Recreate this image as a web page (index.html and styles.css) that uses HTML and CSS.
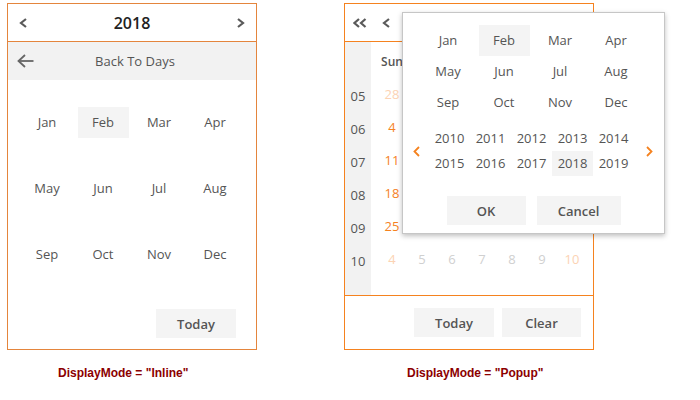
FILE: index.html
```html
<!DOCTYPE html>
<html lang="en">
<head>
  <meta charset="UTF-8" />
  <title>Calendar Display Modes</title>
  <link rel="stylesheet" href="styles.css">
</head>
<body>

<div class="demo">
  <div class="calendar inline">
    <div class="cal-header">
      <svg class="icon" width="8" height="10" viewBox="0 0 8 10"><polyline points="7,1 2,5 7,9"/></svg>
      <span class="cal-title">2018</span>
      <svg class="icon" width="8" height="10" viewBox="0 0 8 10"><polyline points="1,1 6,5 1,9"/></svg>
    </div>
    <div class="back-bar">
      <svg class="back-icon" width="17" height="14" viewBox="0 0 17 14"><line x1="1.5" y1="7" x2="16.5" y2="7"/><polyline points="8,1 1.5,7 8,13"/></svg>
      <span class="back-text">Back To Days</span>
    </div>
    <div class="month-grid">
      <div><span>Jan</span></div><div><span class="active">Feb</span></div><div><span>Mar</span></div><div><span>Apr</span></div>
      <div><span>May</span></div><div><span>Jun</span></div><div><span>Jul</span></div><div><span>Aug</span></div>
      <div><span>Sep</span></div><div><span>Oct</span></div><div><span>Nov</span></div><div><span>Dec</span></div>
    </div>
    <div class="cal-footer">
      <button class="btn btn-today">Today</button>
    </div>
  </div>
  <div class="mode-label label-inline">DisplayMode = "Inline"</div>
</div>

<div class="demo popup-demo">
  <div class="calendar popup">
    <div class="cal-header start">
      <svg class="icon" width="14" height="10" viewBox="0 0 14 10"><polyline points="6,1 1.5,5 6,9"/><polyline points="12.5,1 8,5 12.5,9"/></svg>
      <svg class="icon single" width="8" height="10" viewBox="0 0 8 10"><polyline points="7,1 2,5 7,9"/></svg>
    </div>
    <div class="days-body">
      <div class="week-col">
        <div class="wk head"></div>
        <div class="wk">05</div><div class="wk">06</div><div class="wk">07</div>
        <div class="wk">08</div><div class="wk">09</div><div class="wk">10</div>
      </div>
      <!-- cells marked "under" sit behind the open popup -->
      <div class="day-grid">
        <div class="dow">Sun</div><div class="dow under">Mon</div><div class="dow under">Tue</div><div class="dow under">Wed</div><div class="dow under">Thu</div><div class="dow under">Fri</div><div class="dow under">Sat</div>
        <div class="day other weekend">28</div><div class="day under">29</div><div class="day under">30</div><div class="day under">31</div><div class="day under">1</div><div class="day under">2</div><div class="day under">3</div>
        <div class="day weekend">4</div><div class="day under">5</div><div class="day under">6</div><div class="day under">7</div><div class="day under">8</div><div class="day under">9</div><div class="day under">10</div>
        <div class="day weekend">11</div><div class="day under">12</div><div class="day under">13</div><div class="day under">14</div><div class="day under">15</div><div class="day under">16</div><div class="day under">17</div>
        <div class="day weekend">18</div><div class="day under">19</div><div class="day under">20</div><div class="day under">21</div><div class="day under">22</div><div class="day under">23</div><div class="day under">24</div>
        <div class="day weekend">25</div><div class="day under">26</div><div class="day under">27</div><div class="day under">28</div><div class="day under">1</div><div class="day under">2</div><div class="day under">3</div>
        <div class="day other weekend">4</div><div class="day other">5</div><div class="day other">6</div><div class="day other">7</div><div class="day other">8</div><div class="day other">9</div><div class="day other weekend">10</div>
      </div>
    </div>
    <div class="cal-footer popup-footer">
      <button class="btn btn-today">Today</button>
      <button class="btn btn-clear">Clear</button>
    </div>
  </div>

  <div class="picker">
    <div class="picker-months">
      <div><span>Jan</span></div><div><span class="active">Feb</span></div><div><span>Mar</span></div><div><span>Apr</span></div>
      <div><span>May</span></div><div><span>Jun</span></div><div><span>Jul</span></div><div><span>Aug</span></div>
      <div><span>Sep</span></div><div><span>Oct</span></div><div><span>Nov</span></div><div><span>Dec</span></div>
    </div>
    <div class="picker-years">
      <div class="year-nav">
        <svg class="nav-icon" width="7" height="11" viewBox="0 0 7 11"><polyline points="6,1 1.5,5.5 6,10"/></svg>
      </div>
      <div class="year-grid">
        <span>2010</span><span>2011</span><span>2012</span><span>2013</span><span>2014</span>
        <span>2015</span><span>2016</span><span>2017</span><span class="active">2018</span><span>2019</span>
      </div>
      <div class="year-nav">
        <svg class="nav-icon" width="7" height="11" viewBox="0 0 7 11"><polyline points="1,1 5.5,5.5 1,10"/></svg>
      </div>
    </div>
    <div class="picker-actions">
      <button class="btn btn-ok">OK</button>
      <button class="btn btn-cancel">Cancel</button>
    </div>
  </div>

  <div class="mode-label label-popup">DisplayMode = "Popup"</div>
</div>

</body>
</html>
```

FILE: styles.css
```css
body {
  margin: 0;
  padding: 3px 0 0 7px;
  display: flex;
  gap: 87px;
  font-family: "Open Sans", sans-serif;
  font-size: 13px;
  color: #555;
  background: #fff;
}

.demo {
  width: 250px;
}

.popup-demo {
  position: relative;
}

.calendar {
  box-sizing: border-box;
  width: 250px;
  height: 347px;
  border: 1px solid #e4853d;
  display: flex;
  flex-direction: column;
}

.calendar.popup {
  border-color: #f5821f;
}

.cal-header {
  height: 37px;
  flex: none;
  display: flex;
  align-items: center;
  justify-content: space-between;
  padding: 0 11px;
  border-bottom: 1px solid #e4853d;
}

.popup .cal-header {
  border-bottom-color: #f5821f;
}

.cal-header.start {
  justify-content: flex-start;
  padding: 0 8px;
}

.icon polyline {
  fill: none;
  stroke: #5a5a5a;
  stroke-width: 2.2;
}

.icon.single {
  margin-left: 15px;
}

.cal-title {
  font-size: 16px;
  font-weight: 600;
  color: #222;
}

.back-bar {
  height: 38px;
  flex: none;
  display: flex;
  align-items: center;
  background: #f2f2f2;
}

.back-icon {
  margin-left: 9px;
}

.back-icon line,
.back-icon polyline {
  fill: none;
  stroke: #666;
  stroke-width: 1.8;
}

.back-text {
  flex: 1;
  text-align: center;
  margin-right: 20px;
  font-size: 13px;
}

.month-grid {
  display: grid;
  grid-template-columns: repeat(4, 56px);
  grid-auto-rows: 66px;
  padding: 9px 0 0 11px;
}

.month-grid div,
.picker-months div {
  display: flex;
  align-items: center;
  justify-content: center;
}

.month-grid span,
.picker-months span {
  width: 51px;
  height: 31px;
  line-height: 31px;
  text-align: center;
}

.active {
  background: #f4f4f4;
}

.cal-footer {
  margin-top: auto;
  display: flex;
  justify-content: flex-end;
  padding: 0 20px 11px 0;
}

.popup-footer {
  height: 54px;
  box-sizing: border-box;
  padding: 12px 12px 0 0;
  gap: 8px;
  border-top: 1px solid #f5821f;
}

.btn {
  height: 29px;
  border: none;
  background: #f4f4f4;
  font-family: "Open Sans", sans-serif;
  font-size: 13px;
  font-weight: 600;
  color: #555;
  padding: 0;
}

.btn-today { width: 80px; }
.btn-clear { width: 79px; }
.btn-ok { width: 79px; }
.btn-cancel { width: 84px; }

.days-body {
  height: 253px;
  flex: none;
  display: flex;
  overflow: hidden;
}

.week-col {
  width: 26px;
  background: #f2f2f2;
  padding-top: 4px;
}

.wk {
  height: 33px;
  line-height: 33px;
  text-align: center;
}

.wk.head {
  height: 34px;
}

.day-grid {
  display: grid;
  grid-template-columns: repeat(7, 30px);
  grid-template-rows: 32px repeat(6, 33px);
  padding: 4px 0 0 6px;
}

.dow {
  font-size: 12px;
  font-weight: 600;
  line-height: 32px;
  text-align: center;
  margin-bottom: 2px;
}

.day {
  text-align: center;
  line-height: 33px;
  color: #555;
}

.under {
  visibility: hidden;
}

.day.weekend { color: #f5821f; }
.day.other { color: #d0d0d0; }
.day.other.weekend { color: #fcd3b4; }

.picker {
  position: absolute;
  top: 9px;
  left: 58px;
  box-sizing: border-box;
  width: 263px;
  height: 222px;
  background: #fff;
  border: 1px solid #c6c6c6;
  box-shadow: 0 2px 5px rgba(0, 0, 0, 0.25);
}

.picker-months {
  display: grid;
  grid-template-columns: repeat(4, 56px);
  grid-auto-rows: 31px;
  padding: 12px 0 0 17px;
}

.picker-years {
  display: flex;
  align-items: center;
  margin-top: 8px;
}

.year-nav {
  width: 26px;
  display: flex;
  justify-content: center;
}

.year-nav:last-child {
  width: 30px;
}

.nav-icon polyline {
  fill: none;
  stroke: #f5821f;
  stroke-width: 1.8;
}

.year-grid {
  display: grid;
  grid-template-columns: repeat(5, 41px);
  grid-auto-rows: 25px;
}

.year-grid span {
  line-height: 25px;
  text-align: center;
}

.picker-actions {
  display: flex;
  justify-content: center;
  gap: 11px;
  margin-top: 20px;
}

.mode-label {
  margin-top: 15px;
  font-family: "Liberation Sans", Arial, sans-serif;
  font-size: 12px;
  font-weight: bold;
  color: #8b0000;
  line-height: 16px;
}

.label-inline {
  margin-left: 51px;
}

.label-popup {
  margin-left: 63px;
}
```
